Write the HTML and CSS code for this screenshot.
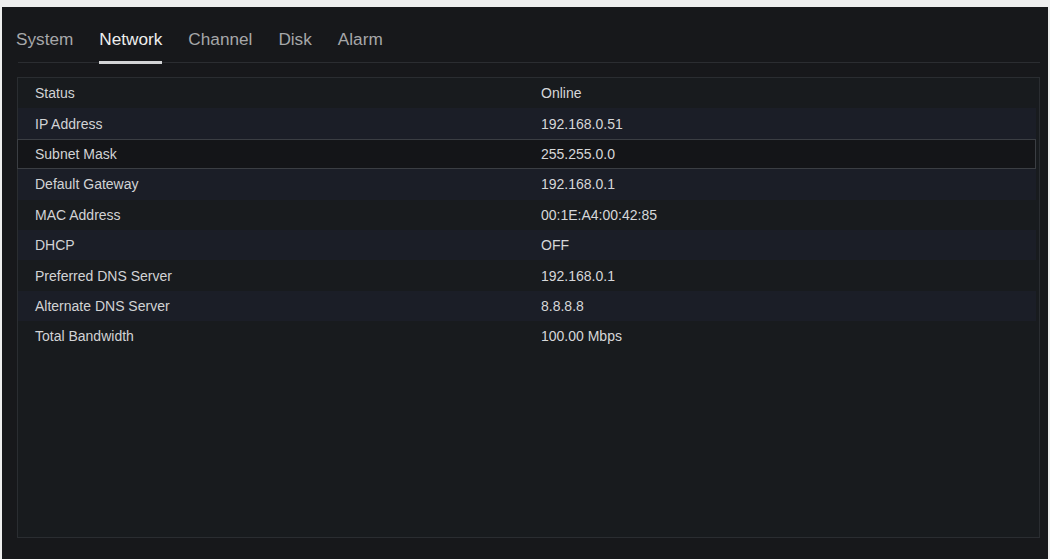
FILE: index.html
```html
<!DOCTYPE html>
<html lang="en">
<head>
<meta charset="utf-8">
<title>Network Info</title>
<link rel="stylesheet" href="styles.css">
</head>
<body>
<div class="panel">
  <div class="tabbar">
    <div class="tabs">
      <div class="tab">System</div>
      <div class="tab active">Network</div>
      <div class="tab">Channel</div>
      <div class="tab">Disk</div>
      <div class="tab">Alarm</div>
    </div>
  </div>
  <div class="box">
    <div class="row"><span class="lbl">Status</span><span class="val">Online</span></div>
    <div class="row stripe"><span class="lbl">IP Address</span><span class="val">192.168.0.51</span></div>
    <div class="row selected"><span class="lbl">Subnet Mask</span><span class="val">255.255.0.0</span></div>
    <div class="row stripe"><span class="lbl">Default Gateway</span><span class="val">192.168.0.1</span></div>
    <div class="row"><span class="lbl">MAC Address</span><span class="val">00:1E:A4:00:42:85</span></div>
    <div class="row stripe"><span class="lbl">DHCP</span><span class="val">OFF</span></div>
    <div class="row"><span class="lbl">Preferred DNS Server</span><span class="val">192.168.0.1</span></div>
    <div class="row stripe"><span class="lbl">Alternate DNS Server</span><span class="val">8.8.8.8</span></div>
    <div class="row"><span class="lbl">Total Bandwidth</span><span class="val">100.00 Mbps</span></div>
  </div>
</div>
</body>
</html>
```
FILE: styles.css
```css
html, body {
  margin: 0;
  padding: 0;
}
body {
  background: #eeeeee;
  font-family: "Liberation Sans", Arial, sans-serif;
  width: 1050px;
  height: 559px;
  overflow: hidden;
}
.panel {
  margin: 7px 2px 0 2px;
  height: 552px;
  box-sizing: border-box;
  background: #17181b;
  padding: 0 8px 0 15px;
  display: flex;
  flex-direction: column;
}
.tabbar {
  height: 55px;
  border-bottom: 1px solid #2b2d31;
  display: flex;
  align-items: flex-end;
  margin-left: 1px;
}
.tabs {
  display: flex;
  gap: 26px;
  margin-left: -2px;
  margin-bottom: -2px;
}
.tab {
  font-size: 17.2px;
  line-height: 20px;
  color: #a6a7a9;
  padding-bottom: 12px;
  border-bottom: 3px solid transparent;
}
.tab.active {
  color: #eeeeee;
  border-bottom-color: #d2d3d5;
}
.box {
  margin-top: 14px;
  height: 461px;
  box-sizing: border-box;
  border: 1px solid #2a2d31;
  background: #181b1e;
  display: flex;
  flex-direction: column;
}
.row {
  display: grid;
  grid-template-columns: 506px 1fr;
  align-items: center;
  height: 30.4px;
  margin-right: 3px;
  box-sizing: border-box;
  font-size: 14px;
  color: #d2d3d5;
}
.row.stripe {
  background: #1b1e27;
}
.row.selected {
  background: #141518;
  border: 1px solid #3b3e43;
  margin-left: -1px;
}
.lbl {
  padding-left: 17px;
}
.val {
  padding-left: 17px;
  color: #d6d7d9;
}
```
